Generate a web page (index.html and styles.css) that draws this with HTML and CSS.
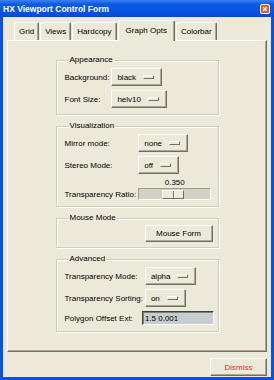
FILE: index.html
```html
<!DOCTYPE html>
<html lang="en">
<head>
    <meta charset="UTF-8">
    <meta name="viewport" content="width=device-width, initial-scale=1.0">
    <title>HX Viewport Control Form</title>
    <link rel="stylesheet" href="styles.css">
</head>
<body>
    <div class="window">
        <div class="titlebar">
            <span class="title">HX Viewport Control Form</span>
            <svg class="close" width="10" height="10" viewBox="0 0 10 10">
                <rect x="0.5" y="0.5" width="9" height="9" rx="1.5" fill="#e0552e" stroke="#fff"/>
                <path d="M3 3 L7 7 M7 3 L3 7" stroke="#fff" stroke-width="1.4"/>
            </svg>
        </div>
        <div class="client">
            <div class="tabs">
                <div class="tab">Grid</div>
                <div class="tab">Views</div>
                <div class="tab">Hardcopy</div>
                <div class="tab active">Graph Opts</div>
                <div class="tab">Colorbar</div>
            </div>
            <div class="panel">
                <fieldset class="group">
                    <legend>Appearance</legend>
                    <div class="rows">
                        <span>Background:</span>
                        <button class="option">black<i class="bar"></i></button>
                        <span>Font Size:</span>
                        <button class="option">helv10<i class="bar"></i></button>
                    </div>
                </fieldset>
                <fieldset class="group">
                    <legend>Visualization</legend>
                    <div class="rows">
                        <span>Mirror mode:</span>
                        <button class="option">none<i class="bar"></i></button>
                        <span>Stereo Mode:</span>
                        <button class="option">off<i class="bar"></i></button>
                        <span class="label-low">Transparency Ratio:</span>
                        <div class="slider">
                            <span class="value">0.350</span>
                            <div class="trough"><div class="thumb"></div></div>
                        </div>
                    </div>
                </fieldset>
                <fieldset class="group mouse">
                    <legend>Mouse Mode</legend>
                    <div class="mouse-row">
                        <button class="push">Mouse Form</button>
                    </div>
                </fieldset>
                <fieldset class="group">
                    <legend>Advanced</legend>
                    <div class="rows">
                        <span>Transparency Mode:</span>
                        <button class="option">alpha<i class="bar"></i></button>
                        <span>Transparency Sorting:</span>
                        <button class="option">on<i class="bar"></i></button>
                        <span>Polygon Offset Ext:</span>
                        <input class="field" type="text" value="1.5 0.001">
                    </div>
                </fieldset>
            </div>
            <div class="footer">
                <button class="push dismiss">Dismiss</button>
            </div>
        </div>
    </div>
</body>
</html>
```

FILE: styles.css
```css
* {
    box-sizing: border-box;
}
body {
    margin: 0;
    font-family: "Liberation Sans", Arial, sans-serif;
    font-size: 8px;
    color: #000;
}
.window {
    width: 274px;
    height: 380px;
    display: flex;
    flex-direction: column;
    background: #0553e0;
}
.titlebar {
    height: 17px;
    display: flex;
    align-items: center;
    justify-content: space-between;
    padding: 0 4px 0 3px;
    background: linear-gradient(#3d80f2, #0a5ae6 25%, #0553e0 75%, #0347cc);
}
.title {
    color: #fff;
    font-size: 8.5px;
    font-weight: bold;
}
.client {
    flex: 1;
    margin: 0 3px 3px;
    padding: 3px 4px 0;
    background: #ece9d8;
    display: flex;
    flex-direction: column;
}
.tabs {
    height: 20px;
    display: flex;
    align-items: flex-end;
    padding-left: 7px;
}
.tab {
    height: 18px;
    line-height: 17px;
    padding: 0 4px;
    margin-right: 1px;
    border: 1px solid;
    border-color: #fff #716f64 transparent #fff;
    border-bottom: none;
    border-radius: 2px 2px 0 0;
    box-shadow: inset -1px 0 0 #aca899;
    background: #ece9d8;
}
.tab.active {
    height: 21px;
    line-height: 19px;
    margin-bottom: -1px;
    padding: 0 7px;
    position: relative;
    z-index: 1;
}
.panel {
    flex: 1;
    border: 1px solid;
    border-color: #fff #716f64 #716f64 #fff;
    box-shadow: inset -1px -1px 0 #aca899;
    padding-top: 14px;
    display: flex;
    flex-direction: column;
    gap: 6px;
}
.group {
    width: 163px;
    margin: 0 auto;
    min-inline-size: auto;
    border: 1px solid #d0cdbd;
    box-shadow: 1px 1px 0 #fff, inset 1px 1px 0 #fff;
    padding: 3px 7px 6px 8px;
}
.group legend {
    margin-left: 4px;
    padding: 0 1px;
    line-height: 10px;
    background: #ece9d8;
}
.rows {
    display: grid;
    grid-template-columns: max-content auto;
    column-gap: 2px;
    row-gap: 4px;
    align-items: center;
    justify-items: start;
}
.label-low {
    align-self: end;
    line-height: 11px;
}
button {
    font: inherit;
    color: inherit;
    margin: 0;
    cursor: pointer;
}
.option,
.push {
    height: 18px;
    background: #ece9d8;
    border: 1px solid;
    border-color: #fff #716f64 #716f64 #fff;
    box-shadow: inset -1px -1px 0 #aca899;
    border-radius: 0;
}
.option {
    display: flex;
    align-items: center;
    gap: 7px;
    padding: 0 7px 0 5px;
}
.bar {
    width: 11px;
    height: 4px;
    border: 1px solid;
    border-color: #fff #716f64 #716f64 #fff;
}
.slider {
    width: 73px;
    display: flex;
    flex-direction: column;
    align-items: center;
}
.value {
    line-height: 10px;
}
.trough {
    width: 73px;
    height: 12px;
    display: flex;
    align-items: center;
    background: #d3d0c4;
    border: 1px solid;
    border-color: #9d9a8c #fff #fff #9d9a8c;
}
.thumb {
    width: 22px;
    height: 9px;
    margin-left: 23px;
    background: #ece9d8;
    border: 1px solid;
    border-color: #fff #716f64 #716f64 #fff;
    display: flex;
    justify-content: center;
}
.thumb::after {
    content: "";
    width: 1px;
    background: #716f64;
    box-shadow: 1px 0 0 #fff;
}
.group.mouse {
    padding: 2px 5px 5px 8px;
}
.mouse-row {
    display: flex;
    justify-content: flex-end;
}
.push {
    height: 17px;
    width: 68px;
    padding: 0;
}
.field {
    width: 72px;
    height: 14px;
    margin-left: -3px;
    padding: 0 2px;
    font: inherit;
    color: #000;
    background: #c5cdcf;
    border: 1px solid;
    border-color: #404040 #fff #fff #404040;
    box-shadow: inset 1px 1px 0 #808080;
}
.footer {
    display: flex;
    justify-content: flex-end;
    padding: 6px 0 1px;
}
.dismiss {
    width: 57px;
    height: 18px;
    color: #e8302c;
}
```
